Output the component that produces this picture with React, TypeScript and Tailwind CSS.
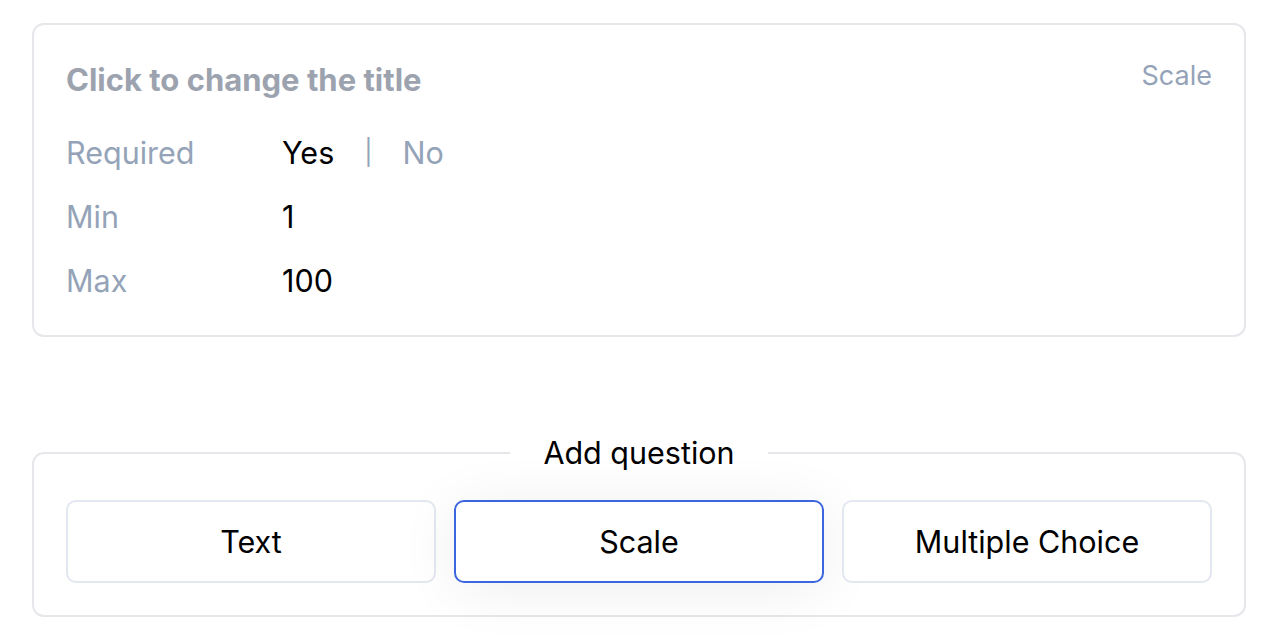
import React from "react";

type Row = { label: string; value: React.ReactNode };

const rows: Row[] = [
  {
    label: "Required",
    value: (
      <div className="flex items-center">
        <span className="text-black">Yes</span>
        <span className="mx-[30px] text-[25px] text-[#94a3b8]">|</span>
        <span className="text-[#94a3b8]">No</span>
      </div>
    ),
  },
  { label: "Min", value: "1" },
  { label: "Max", value: "100" },
];

const questionTypes = ["Text", "Scale", "Multiple Choice"];

export default function App() {
  return (
    <div
      className="min-h-screen bg-white pl-[32px] pr-[38px] pt-[23px]"
      style={{ fontFamily: "Inter, 'Noto Sans', sans-serif" }}
    >
      <div className="rounded-[12px] border-2 border-[#e5e7eb] px-[32px] pt-[35px] pb-[22px]">
        <div className="flex items-start justify-between">
          <h2 className="text-[31px] font-bold leading-[40px] text-[#9ca3af]">
            Click to change the title
          </h2>
          <span className="text-[27px] leading-[32px] text-[#94a3b8]">Scale</span>
        </div>
        <div className="mt-[21px]">
          {rows.map((row) => (
            <div key={row.label} className="flex h-[64px] items-center text-[30.5px]">
              <span className="w-[216px] text-[#94a3b8]">{row.label}</span>
              <span className="text-black">{row.value}</span>
            </div>
          ))}
        </div>
      </div>

      <fieldset className="mt-[96px] rounded-[12px] border-2 border-[#e5e7eb] px-[32px] pt-[27px] pb-[32px]">
        <legend className="mx-auto px-[33px] text-[30.5px] leading-[40px] text-black">
          Add question
        </legend>
        <div className="grid grid-cols-3 gap-[18px]">
          {questionTypes.map((type) => (
            <button
              key={type}
              type="button"
              className={
                type === "Scale"
                  ? "h-[83px] rounded-[10px] border-2 border-[#3b66e0] bg-white text-[30.5px] text-black shadow-[0_6px_60px_rgba(0,0,0,0.07)]"
                  : "h-[83px] rounded-[10px] border-2 border-[#e3e7ef] bg-white text-[30.5px] text-black"
              }
            >
              {type}
            </button>
          ))}
        </div>
      </fieldset>
    </div>
  );
}
